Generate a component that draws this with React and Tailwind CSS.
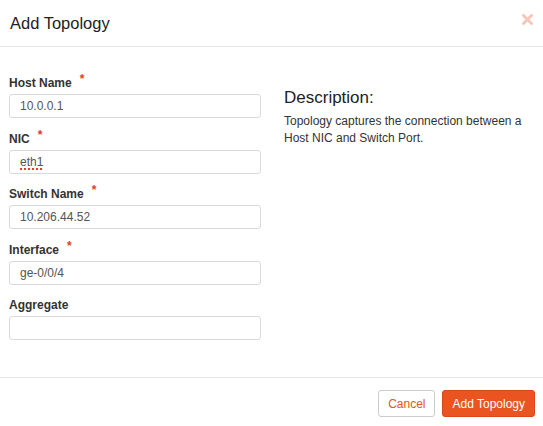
const fields = [
  { label: 'Host Name', value: '10.0.0.1', required: true },
  { label: 'NIC', value: 'eth1', required: true, misspelled: true },
  { label: 'Switch Name', value: '10.206.44.52', required: true },
  { label: 'Interface', value: 'ge-0/0/4', required: true },
  { label: 'Aggregate', value: '', required: false },
];

function Field({ label, value, required, misspelled }) {
  return (
    <div className="flex flex-col">
      <label className="h-[23px] pt-[3px] text-[12px] leading-[18px] font-bold text-[#333]">
        {label}
        {required && (
          <span className="relative -top-[4px] ml-[8px] text-[12px] text-[#e0421b]">*</span>
        )}
      </label>
      <div className="h-[24px] w-full rounded-[3px] border border-[#d9d9d9] bg-white px-[10px] flex items-center text-[12px] text-[#555]">
        <span
          className={
            misspelled ? 'underline decoration-dotted decoration-[#e53935] decoration-[1.5px] underline-offset-[3px]' : ''
          }
        >
          {value}
        </span>
      </div>
    </div>
  );
}

export default function App() {
  return (
    <div className="w-[543px] h-[426px] bg-white flex flex-col" style={{ fontFamily: "'Liberation Sans', Arial, sans-serif" }}>
      <div className="h-[47px] flex items-center justify-between pl-[10px] pr-[10px] border-b border-[#e5e5e5] shrink-0">
        <h3 className="text-[16.5px] text-[#222] leading-none">Add Topology</h3>
        <button className="text-[#f8c6b9] -mt-[7px]">
          <svg width="11" height="11" viewBox="0 0 11 11">
            <path d="M1.5 1.5 L9.5 9.5 M9.5 1.5 L1.5 9.5" stroke="currentColor" strokeWidth="3" strokeLinecap="round" />
          </svg>
        </button>
      </div>

      <div className="flex-1 flex gap-[23px] pl-[9px] pr-[8px] pt-[24px]">
        <div className="w-[252px] flex flex-col gap-[8.5px]">
          {fields.map((f) => (
            <Field key={f.label} {...f} />
          ))}
        </div>
        <div className="flex-1 pt-[17px]">
          <h3 className="text-[17px] leading-[20px] text-[#222] mb-[5px]">Description:</h3>
          <p className="text-[12px] leading-[17px] text-[#333]">
            Topology captures the connection between a Host NIC and Switch Port.
          </p>
        </div>
      </div>

      <div className="h-[49px] border-t border-[#e5e5e5] flex items-start justify-end gap-[7px] pt-[12px] pr-[8px] shrink-0">
        <button className="h-[27px] px-[9px] rounded-[3px] border border-[#ccc] bg-white text-[12px] text-[#e95420]">
          Cancel
        </button>
        <button className="h-[27px] px-[9px] rounded-[3px] border border-[#d8481a] bg-[#e95420] text-[12px] text-white">
          Add Topology
        </button>
      </div>
    </div>
  );
}
